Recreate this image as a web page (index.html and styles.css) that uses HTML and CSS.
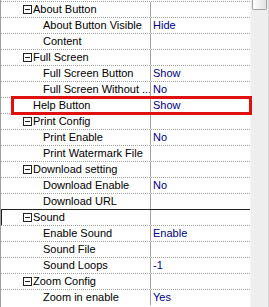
FILE: index.html
```html
<!DOCTYPE html>
<html lang="en">
<head>
  <meta charset="UTF-8" />
  <title>Property Grid</title>
  <link rel="stylesheet" href="styles.css">
</head>
<body>

  <div class="grid">
    <div class="rows">
      <div class="row group"><div class="name"><span class="box"></span>About Button</div><div class="value"></div></div>
      <div class="row"><div class="name">About Button Visible</div><div class="value">Hide</div></div>
      <div class="row"><div class="name">Content</div><div class="value"></div></div>
      <div class="row group"><div class="name"><span class="box"></span>Full Screen</div><div class="value"></div></div>
      <div class="row"><div class="name">Full Screen Button</div><div class="value">Show</div></div>
      <div class="row"><div class="name">Full Screen Without ...</div><div class="value">No</div></div>
      <div class="row loose"><div class="name">Help Button</div><div class="value">Show</div></div>
      <div class="row group"><div class="name"><span class="box"></span>Print Config</div><div class="value"></div></div>
      <div class="row"><div class="name">Print Enable</div><div class="value">No</div></div>
      <div class="row"><div class="name">Print Watermark File</div><div class="value"></div></div>
      <div class="row group"><div class="name"><span class="box"></span>Download setting</div><div class="value"></div></div>
      <div class="row"><div class="name">Download Enable</div><div class="value">No</div></div>
      <div class="row"><div class="name">Download URL</div><div class="value"></div></div>
      <div class="row group focused"><div class="name"><span class="box"></span>Sound</div><div class="value"></div></div>
      <div class="row"><div class="name">Enable Sound</div><div class="value">Enable</div></div>
      <div class="row"><div class="name">Sound File</div><div class="value"></div></div>
      <div class="row"><div class="name">Sound Loops</div><div class="value">-1</div></div>
      <div class="row group"><div class="name"><span class="box"></span>Zoom Config</div><div class="value"></div></div>
      <div class="row"><div class="name">Zoom in enable</div><div class="value">Yes</div></div>
    </div>

    <div class="scrollbar">
      <div class="thumb"></div>
    </div>

    <!-- red annotation around the Help Button row -->
    <div class="mark"></div>
  </div>

</body>
</html>
```

FILE: styles.css
```css
/* === Global === */
body {
  margin: 0;
  padding: 0;
  background: #fff;
  font-family: "Liberation Sans", Arial, sans-serif;
  font-size: 11px;
}

/* === Grid === */
.grid {
  position: relative;
  display: flex;
  width: 269px;
  height: 307px;
  overflow: hidden;
  box-sizing: border-box;
  border-left: 1px solid #a0a0a0;
}

.rows {
  width: 249px;
  padding-top: 1px;
}

.row {
  display: flex;
  height: 15px;
  line-height: 15px;
  padding-top: 1px;
  background-image: repeating-linear-gradient(to right, #a0a0a0 0 1px, transparent 1px 2px);
  background-size: 100% 1px;
  background-repeat: no-repeat;
}

.name {
  width: 150px;
  padding-left: 42px;
  box-sizing: border-box;
  border-right: 1px solid #a0a0a0;
  color: #000;
  white-space: nowrap;
  overflow: hidden;
}

.value {
  flex: 1;
  padding-left: 2px;
  color: #000080;
  white-space: nowrap;
}

.row.group .name {
  display: flex;
  align-items: center;
  padding-left: 22px;
}

.row.loose .name {
  padding-left: 32px;
}

.box {
  position: relative;
  width: 7px;
  height: 7px;
  margin-right: 1px;
  border: 1px solid #222;
  background: #fff;
}

.box::after {
  content: "";
  position: absolute;
  left: 1px;
  top: 3px;
  width: 5px;
  height: 1px;
  background: #222;
}

/* focused category row */
.row.focused {
  background-image: none;
  border-top: 1px solid #222;
  padding-top: 0;
  box-shadow: inset 1px 0 0 #222, inset 0 -1px 0 #fff;
}

/* === Scrollbar === */
.scrollbar {
  width: 17px;
  background: #eeeeee;
  border-left: 1px solid #f7f7f7;
  border-right: 1px solid #d8d8d8;
  box-shadow: 1px 0 0 #8a8a8a;
}

.thumb {
  height: 9px;
  margin: 0 1px;
  border: 1px solid #a0a0a0;
  border-top: none;
  border-radius: 0 0 2px 2px;
  background: linear-gradient(to right, #fff, #e2e2e2);
}

/* === Annotation === */
.mark {
  position: absolute;
  left: 10px;
  top: 96px;
  width: 235px;
  height: 13px;
  border: 3px solid #e01010;
}
```
